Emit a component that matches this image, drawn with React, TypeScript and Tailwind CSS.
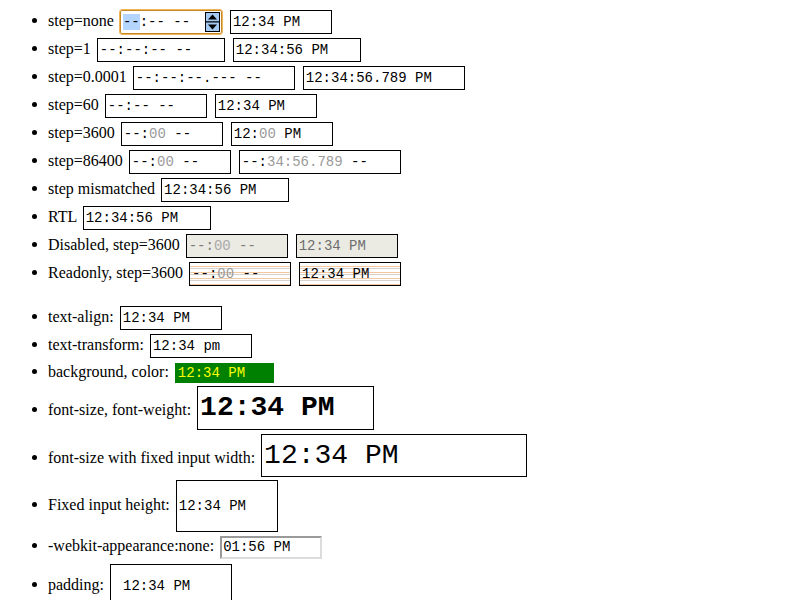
import type { ReactNode } from "react"

// Time-field lookalike: bordered mono box sitting on the text baseline
function Field({ w = "w-[102px]", extra = "", children }: { w?: string; extra?: string; children: ReactNode }) {
  return (
    <span
      className={`inline-block align-baseline mx-[2px] my-[2px] h-[24px] px-[2px] leading-[22px] border border-black whitespace-pre text-[14px] font-['Liberation_Mono',monospace] ${w} ${extra}`}
    >
      {children}
    </span>
  )
}

const Dim = ({ children }: { children: ReactNode }) => <span className="text-[#9a9a9a]">{children}</span>

function Item({ children }: { children: ReactNode }) {
  return (
    <li className="whitespace-nowrap">
      <span className="inline-block w-[5px] h-[5px] rounded-full bg-black mr-[11px] align-[3px]" />
      {children}
    </li>
  )
}

function Spin() {
  return (
    <svg width="15" height="20" viewBox="0 0 15 20" className="shrink-0">
      <rect x="0.5" y="0.5" width="14" height="9.5" fill="#a4c9f2" stroke="#000" />
      <rect x="0.5" y="10" width="14" height="9.5" fill="#a4c9f2" stroke="#000" />
      <polygon points="7.5,2.5 3,7.5 12,7.5" fill="#000" />
      <polygon points="3,12.5 12,12.5 7.5,17.5" fill="#000" />
    </svg>
  )
}

const stripes =
  "bg-[repeating-linear-gradient(to_bottom,#ffffff_0px,#ffffff_3px,#f3c7a2_3px,#f3c7a2_4px,#ffffff_4px,#ffffff_5px,#d9d2cc_5px,#d9d2cc_6px)]"

export default function App() {
  return (
    <div className="min-h-[600px] bg-white text-black pt-[8px] pl-[32px] text-[16px] font-['Liberation_Serif',serif]">
      <ul className="leading-normal">
        <Item>
          step=none{" "}
          <span className="inline-flex items-center align-baseline mx-[2px] my-[2px] h-[24px] w-[102px] pl-[2px] pr-[1px] border border-[#c58a26] outline outline-1 outline-[#f0b45a] rounded-[2px] whitespace-pre text-[14px] font-['Liberation_Mono',monospace]">
            <span className="leading-[22px]"><span className="bg-[#b4d5fe]">--</span>:-- --</span>
            <span className="flex-1" />
            <Spin />
          </span>{" "}
          <Field>12:34 PM</Field>
        </Item>
        <Item>
          step=1 <Field w="w-[128px]">--:--:-- --</Field> <Field w="w-[128px]">12:34:56 PM</Field>
        </Item>
        <Item>
          step=0.0001 <Field w="w-[162px]">--:--:--.--- --</Field> <Field w="w-[162px]">12:34:56.789 PM</Field>
        </Item>
        <Item>
          step=60 <Field>--:-- --</Field> <Field>12:34 PM</Field>
        </Item>
        <Item>
          step=3600 <Field>--:<Dim>00</Dim> --</Field> <Field>12:<Dim>00</Dim> PM</Field>
        </Item>
        <Item>
          step=86400 <Field>--:<Dim>00</Dim> --</Field>{" "}
          <Field w="w-[162px]">--:<Dim>34:56.789</Dim> --</Field>
        </Item>
        <Item>
          step mismatched <Field w="w-[128px]">12:34:56 PM</Field>
        </Item>
        <Item>
          RTL <Field w="w-[128px]">12:34:56 PM</Field>
        </Item>
        <Item>
          Disabled, step=3600{" "}
          <Field extra="bg-[#ebebe4] border-[#5a5a5a] text-[#7a7a7a]">--:<span className="text-[#a8a8a8]">00</span> --</Field>{" "}
          <Field extra="bg-[#ebebe4] border-[#5a5a5a] text-[#6e6e6e]">12:34 PM</Field>
        </Item>
        <Item>
          Readonly, step=3600{" "}
          <Field extra={stripes}>
            --:<Dim>00</Dim> --
          </Field>{" "}
          <Field extra={stripes}>12:34 PM</Field>
        </Item>
      </ul>

      <ul className="mt-[16px] leading-normal">
        <Item>
          text-align: <Field>12:34 PM</Field>
        </Item>
        <Item>
          text-transform: <Field>12:34 pm</Field>
        </Item>
        <Item>
          background, color:{" "}
          <Field extra="!border-0 !h-[20px] !leading-[20px] w-[99px] pl-[3px] bg-[#008000] text-[#ffff00]" w="">12:34 PM</Field>
        </Item>
        <Item>
          font-size, font-weight:{" "}
          <Field w="w-[177px]" extra="!mt-[1px] !h-[44px] !leading-[42px] !text-[28px] font-bold">12:34 PM</Field>
        </Item>
        <Item>
          font-size with fixed input width:{" "}
          <Field w="w-[266px]" extra="!h-[43px] !leading-[41px] !text-[28px]">12:34 PM</Field>
        </Item>
        <Item>
          Fixed input height: <Field extra="!mt-[1px] !h-[52px] !leading-[50px]">12:34 PM</Field>
        </Item>
        <Item>
          -webkit-appearance:none:{" "}
          <Field extra="!mt-[1px] !border-2 border-t-[#9a9a9a] border-l-[#9a9a9a] border-b-[#dcdcdc] border-r-[#dcdcdc] !h-[23px] !leading-[19px] !px-[1px]">01:56 PM</Field>
        </Item>
        <Item>
          padding: <Field w="w-[122px]" extra="!mt-[3px] !h-[44px] !px-[12px] !py-[10px]">12:34 PM</Field>
        </Item>
      </ul>
    </div>
  )
}
